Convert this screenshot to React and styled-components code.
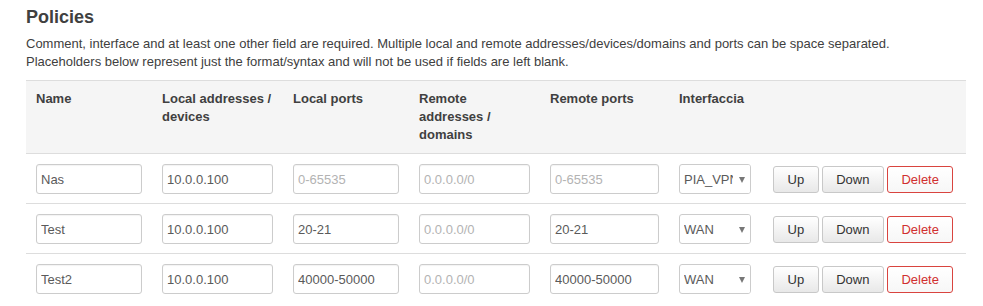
import React from "react";
import styled, { createGlobalStyle } from "styled-components";

const GlobalStyle = createGlobalStyle`
  html, body { margin: 0; padding: 0; background: #fff; }
  body {
    font-family: "Liberation Sans", Arial, sans-serif;
    color: #404040;
    font-size: 13px;
  }
`;

const Page = styled.div`
  padding: 6px 0 0 26px;
  width: 940px;
`;

const Title = styled.h2`
  margin: 0;
  font-size: 18px;
  line-height: 22px;
  font-weight: bold;
  color: #404040;
`;

const Description = styled.p`
  margin: 7px 0 9px;
  font-size: 13px;
  line-height: 18px;
  color: #404040;
`;

const COLUMNS = "126px 131px 126px 131px 129px 94px 1fr";

const Row = styled.div`
  display: grid;
  grid-template-columns: ${COLUMNS};
  border-top: 1px solid #ddd;
  background: ${(p) => (p.$header ? "#f5f5f5" : "#fff")};
`;

const HeadCell = styled.div`
  padding: 9px 10px;
  font-size: 13px;
  line-height: 18px;
  font-weight: bold;
  color: #404040;
`;

const Cell = styled.div`
  padding: 10px 10px 9px;
  display: flex;
  align-items: center;
  min-width: 0;
`;

const TextInput = styled.input`
  box-sizing: border-box;
  width: 100%;
  height: 30px;
  margin: 0;
  padding: 0 4px;
  border: 1px solid #ccc;
  border-radius: 3px;
  box-shadow: inset 0 1px 1px rgba(0, 0, 0, 0.05);
  font-family: "Liberation Sans", Arial, sans-serif;
  font-size: 13px;
  color: #5a5a5a;
  background: #fff;
  outline: none;
  &::placeholder { color: #b3b3b3; opacity: 1; }
`;

const SelectWrap = styled.div`
  position: relative;
  width: 72px;
  height: 30px;
`;

const Select = styled.select`
  box-sizing: border-box;
  appearance: none;
  -webkit-appearance: none;
  width: 72px;
  height: 30px;
  margin: 0;
  padding: 0 17px 0 4px;
  border: 1px solid #ccc;
  border-radius: 3px;
  background: #fff;
  font-family: "Liberation Sans", Arial, sans-serif;
  font-size: 13px;
  color: #5a5a5a;
  outline: none;
`;

const ArrowBox = styled.span`
  position: absolute;
  right: 1px;
  top: 1px;
  bottom: 1px;
  width: 16px;
  background: #fff;
  border-radius: 0 2px 2px 0;
  display: flex;
  align-items: center;
  justify-content: center;
  pointer-events: none;
`;

const Arrow = styled.span`
  width: 0;
  height: 0;
  margin-top: 1px;
  border-left: 3.5px solid transparent;
  border-right: 3.5px solid transparent;
  border-top: 6px solid #777;
`;

const Actions = styled.div`
  padding: 10px 10px 9px;
  display: flex;
  align-items: center;
  gap: 3px;
`;

const Button = styled.button`
  box-sizing: border-box;
  height: 27px;
  margin: 0;
  padding: 0 13.5px;
  border: 1px solid ${(p) => (p.$danger ? "#d9443f" : "#c8c8c8")};
  border-radius: 3px;
  background: ${(p) =>
    p.$danger
      ? "linear-gradient(#fff, #f7f7f7)"
      : "linear-gradient(#ffffff, #e8e8e8)"};
  font-family: "Liberation Sans", Arial, sans-serif;
  font-size: 13px;
  line-height: 25px;
  color: ${(p) => (p.$danger ? "#d12f2f" : "#333")};
  cursor: pointer;
`;

const headers = [
  "Name",
  "Local addresses / devices",
  "Local ports",
  "Remote addresses / domains",
  "Remote ports",
  "Interfaccia",
  "",
];

const rows = [
  { name: "Nas", local: "10.0.0.100", lports: "", remote: "", rports: "", iface: "PIA_VPN" },
  { name: "Test", local: "10.0.0.100", lports: "20-21", remote: "", rports: "20-21", iface: "WAN" },
  { name: "Test2", local: "10.0.0.100", lports: "40000-50000", remote: "", rports: "40000-50000", iface: "WAN" },
];

export default function App() {
  return (
    <>
      <GlobalStyle />
      <Page>
        <Title>Policies</Title>
        <Description>
          Comment, interface and at least one other field are required. Multiple local and remote addresses/devices/domains and ports can be space separated.
          <br />
          Placeholders below represent just the format/syntax and will not be used if fields are left blank.
        </Description>
        <div>
          <Row $header>
            {headers.map((h, i) => (
              <HeadCell key={i}>{h}</HeadCell>
            ))}
          </Row>
          {rows.map((r, i) => (
            <Row key={i}>
              <Cell><TextInput defaultValue={r.name} /></Cell>
              <Cell><TextInput defaultValue={r.local} /></Cell>
              <Cell><TextInput defaultValue={r.lports} placeholder="0-65535" /></Cell>
              <Cell><TextInput defaultValue={r.remote} placeholder="0.0.0.0/0" /></Cell>
              <Cell><TextInput defaultValue={r.rports} placeholder="0-65535" /></Cell>
              <Cell>
                <SelectWrap>
                  <Select defaultValue={r.iface}>
                    <option value="WAN">WAN</option>
                    <option value="PIA_VPN">PIA_VPN</option>
                  </Select>
                  <ArrowBox><Arrow /></ArrowBox>
                </SelectWrap>
              </Cell>
              <Actions>
                <Button>Up</Button>
                <Button>Down</Button>
                <Button $danger>Delete</Button>
              </Actions>
            </Row>
          ))}
        </div>
      </Page>
    </>
  );
}
